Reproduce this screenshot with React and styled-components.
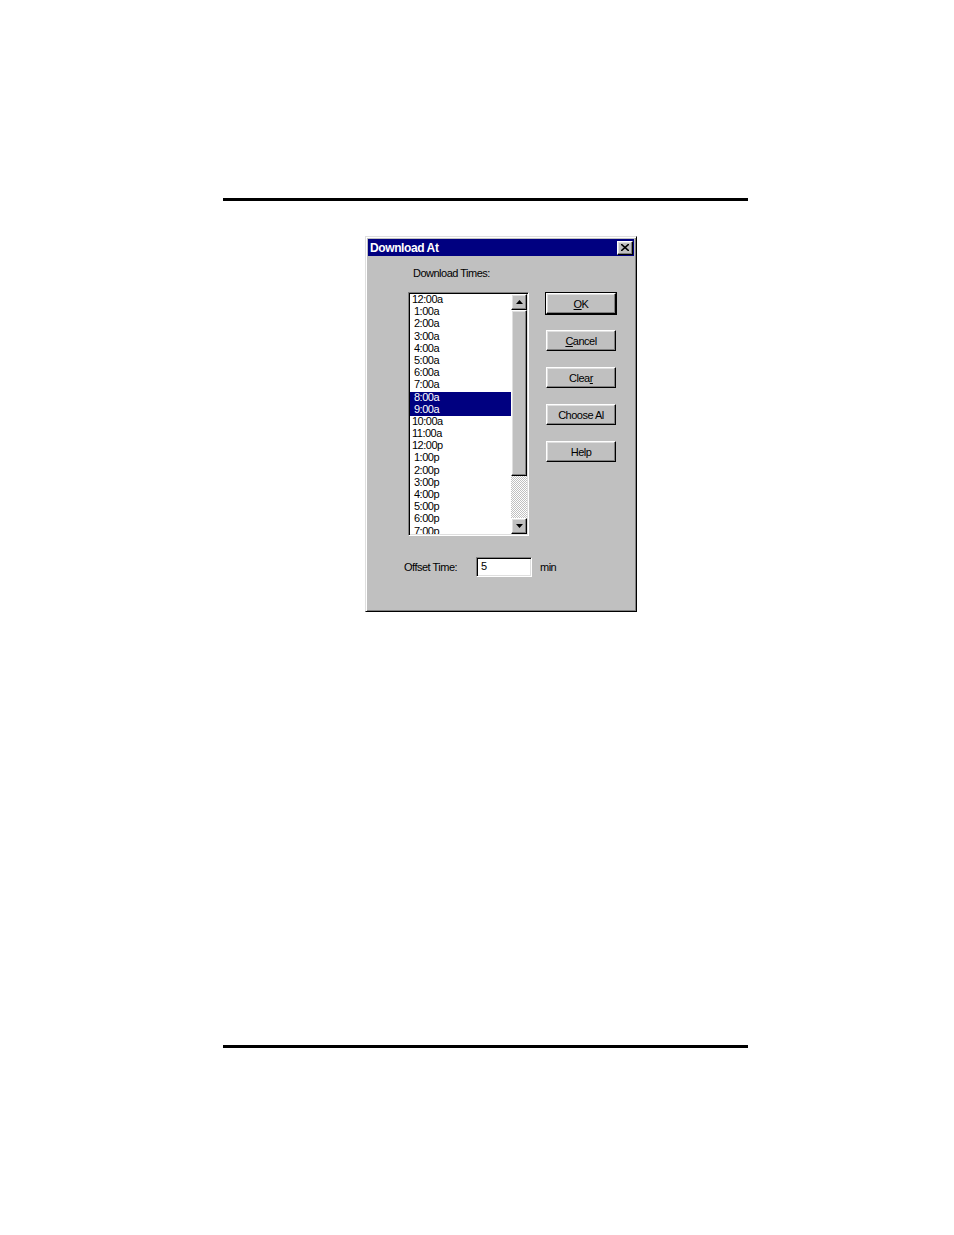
import styled, { createGlobalStyle } from "styled-components";

const GlobalStyle = createGlobalStyle`
  body {
    margin: 0;
    background: #fff;
    font-family: "Liberation Sans", Arial, sans-serif;
  }
`;

const Page = styled.div`
  width: 525px;
  padding: 198px 0 0 223px;
`;

const Rule = styled.div`
  height: 3px;
  background: #000;
`;

const Dialog = styled.div`
  box-sizing: border-box;
  width: 272px;
  height: 376px;
  margin: ${(p) => p.$top}px 0 433px 142px;
  padding: 2px;
  background: #c0c0c0;
  border: 1px solid;
  border-color: #dfdfdf #000 #000 #dfdfdf;
  box-shadow: inset 1px 1px #fff, inset -1px -1px #808080;
  font-size: 11px;
  letter-spacing: -0.5px;
  color: #000;
`;

const TitleBar = styled.div`
  height: 17px;
  display: flex;
  align-items: center;
  justify-content: space-between;
  padding: 0 1px 0 2px;
  background: #000080;
`;

const Title = styled.span`
  color: #fff;
  font-weight: bold;
  font-size: 12px;
  letter-spacing: -0.4px;
`;

const Bevel = styled.div`
  box-sizing: border-box;
  display: flex;
  align-items: center;
  justify-content: center;
  background: #c0c0c0;
  border: 1px solid;
  border-color: #fff #000 #000 #fff;
  box-shadow: inset -1px -1px #808080, inset 1px 1px #dfdfdf;
`;

const CloseBox = styled(Bevel)`
  width: 16px;
  height: 14px;
`;

const Body = styled.div`
  padding: 11px 0 0 36px;
`;

const Caption = styled.div`
  height: 13px;
  line-height: 13px;
  margin: 0 0 12px 9px;
`;

const Content = styled.div`
  display: flex;
  gap: 17px;
  margin-left: 4px;
`;

const Sunken = styled.div`
  box-sizing: border-box;
  background: #fff;
  border: 1px solid;
  border-color: #808080 #fff #fff #808080;
  box-shadow: inset 1px 1px #000, inset -1px -1px #dfdfdf;
`;

const ListBox = styled(Sunken)`
  width: 121px;
  height: 244px;
  padding: 1px;
  display: flex;
`;

const Items = styled.div`
  flex: 1;
  overflow: hidden;
`;

const Item = styled.div`
  height: 12.2px;
  line-height: 11.5px;
  padding-left: ${(p) => (p.$wide ? 2 : 4)}px;
  white-space: nowrap;
  background: ${(p) => (p.$selected ? "#000080" : "transparent")};
  color: ${(p) => (p.$selected ? "#fff" : "#000")};
`;

const ScrollBar = styled.div`
  width: 16px;
  display: flex;
  flex-direction: column;
`;

const ArrowButton = styled(Bevel)`
  height: 16px;
  flex: none;
`;

const Thumb = styled(Bevel)`
  height: 166px;
  flex: none;
`;

const Track = styled.div`
  flex: 1;
  background: repeating-conic-gradient(#c0c0c0 0 25%, #fff 0 50%) 0 0 / 2px 2px;
`;

const Buttons = styled.div`
  display: flex;
  flex-direction: column;
  gap: 16px;
  margin-top: 1px;
`;

const Button = styled(Bevel)`
  width: 70px;
  height: 21px;
  outline: ${(p) => (p.$default ? "1px solid #000" : "none")};
`;

const Key = styled.span`
  text-decoration: underline;
`;

const OffsetRow = styled.div`
  display: flex;
  align-items: center;
  margin-top: 21px;
`;

const OffsetLabel = styled.span`
  width: 72px;
`;

const Input = styled(Sunken)`
  width: 56px;
  height: 20px;
  padding: 2px 0 0 4px;
  line-height: 13px;
`;

const Unit = styled.span`
  margin-left: 8px;
`;

const times = [
  "12:00a", "1:00a", "2:00a", "3:00a", "4:00a", "5:00a", "6:00a", "7:00a",
  "8:00a", "9:00a", "10:00a", "11:00a", "12:00p", "1:00p", "2:00p", "3:00p",
  "4:00p", "5:00p", "6:00p", "7:00p",
];
const selected = ["8:00a", "9:00a"];

const Arrow = ({ down }) => (
  <svg width="7" height="4" viewBox="0 0 7 4">
    <path d={down ? "M0 0H7L3.5 4Z" : "M0 4H7L3.5 0Z"} fill="#000" />
  </svg>
);

const App = () => (
  <Page>
    <GlobalStyle />
    <Rule />
    <Dialog $top={35}>
      <TitleBar>
        <Title>Download At</Title>
        <CloseBox>
          <svg width="8" height="7" viewBox="0 0 8 7">
            <path d="M0 0L8 7M8 0L0 7" stroke="#000" strokeWidth="1.6" />
          </svg>
        </CloseBox>
      </TitleBar>
      <Body>
        <Caption>Download Times:</Caption>
        <Content>
          <ListBox>
            <Items>
              {times.map((t) => (
                <Item
                  key={t}
                  $wide={t.length > 5}
                  $selected={selected.includes(t)}
                >
                  {t}
                </Item>
              ))}
            </Items>
            <ScrollBar>
              <ArrowButton>
                <Arrow />
              </ArrowButton>
              <Thumb />
              <Track />
              <ArrowButton>
                <Arrow down />
              </ArrowButton>
            </ScrollBar>
          </ListBox>
          <Buttons>
            <Button $default>
              <Key>O</Key>K
            </Button>
            <Button>
              <Key>C</Key>ancel
            </Button>
            <Button>
              Clea<Key>r</Key>
            </Button>
            <Button>Choose Al</Button>
            <Button>Help</Button>
          </Buttons>
        </Content>
        <OffsetRow>
          <OffsetLabel>Offset Time:</OffsetLabel>
          <Input>5</Input>
          <Unit>min</Unit>
        </OffsetRow>
      </Body>
    </Dialog>
    <Rule />
  </Page>
);

export default App;
